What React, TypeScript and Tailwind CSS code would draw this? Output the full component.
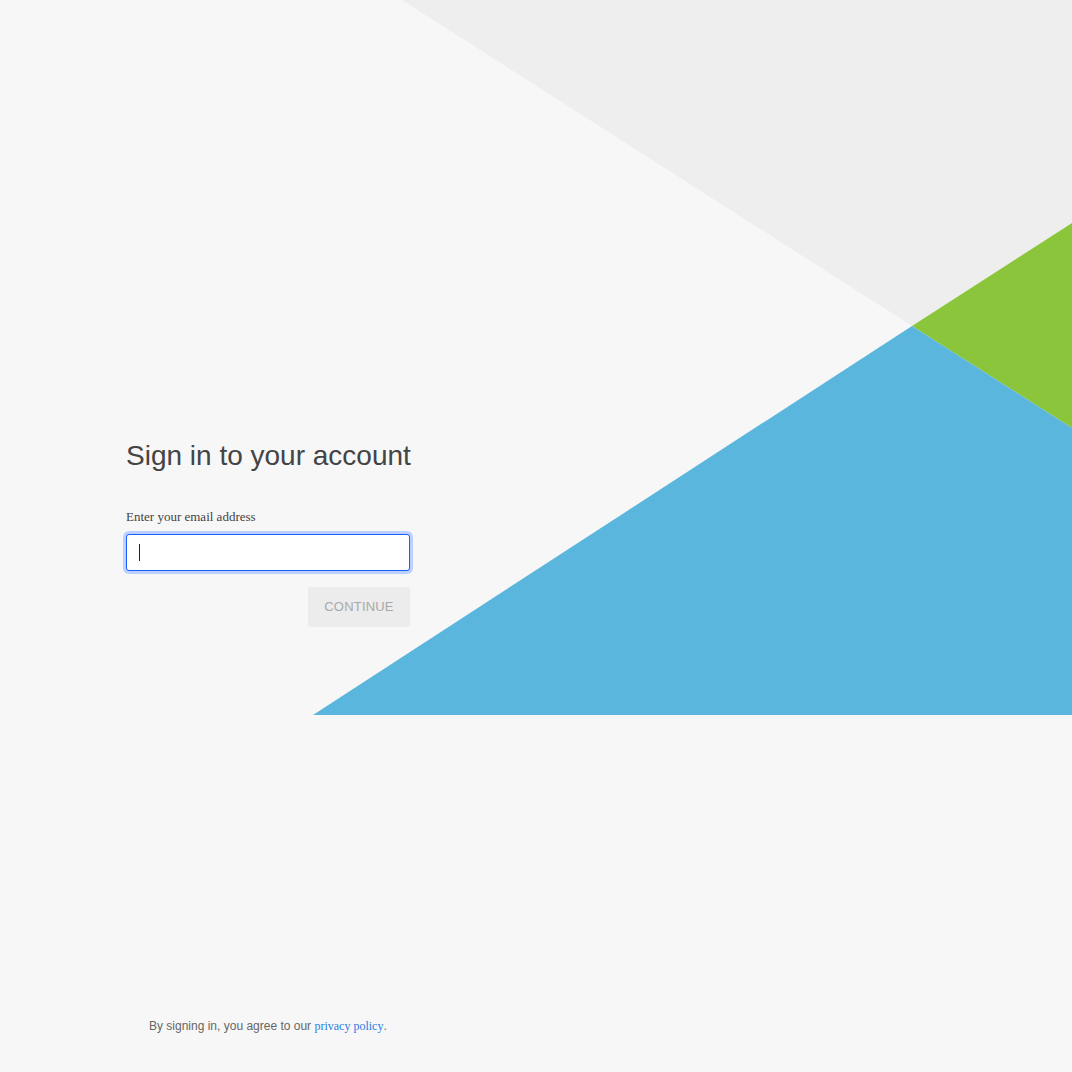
import React from "react";

const Backdrop = () => (
  <svg
    className="pointer-events-none absolute inset-0 h-full w-full"
    viewBox="0 0 1072 1072"
    preserveAspectRatio="none"
  >
    <polygon points="402,0 1072,0 1072,223 912,326" fill="#eeeeee" />
    <polygon points="912,326 1072,223 1072,428" fill="#8bc53b" />
    <polygon points="313,715 912,326 1072,428 1072,715" fill="#5ab6dd" />
  </svg>
);

const App: React.FC = () => {
  return (
    <div className="relative flex h-[1072px] w-full flex-col overflow-hidden bg-[#f7f7f7] font-['Liberation_Sans',Arial,sans-serif]">
      <Backdrop />
      <main className="relative flex flex-1 items-center pl-[126px] pt-[46px]">
        <form className="flex w-[284px] flex-col" onSubmit={(e) => e.preventDefault()}>
          <h1 className="text-[28px] leading-[34px] text-[#444444] whitespace-nowrap">
            Sign in to your account
          </h1>
          <label
            htmlFor="email"
            className="mt-[36px] font-['Liberation_Serif','Times_New_Roman',serif] text-[13px] leading-[16px] text-[#444444]"
          >
            Enter your email address
          </label>
          <div className="relative mt-[9px]">
            <input
              id="email"
              type="email"
              className="h-[37px] w-full rounded-[3px] border border-[#1a5cff] bg-white px-3 text-sm text-[#333] outline-none ring-[3px] ring-[#bcd0ff]"
            />
            <span className="pointer-events-none absolute left-[13px] top-[10px] h-[17px] w-px bg-[#222]"></span>
          </div>
          <div className="mt-[16px] flex justify-end">
            <button
              type="submit"
              disabled
              className="h-[40px] w-[102px] rounded-[2px] bg-[#ececec] text-[13px] tracking-[0.2px] text-[#a9a9a9]"
            >
              CONTINUE
            </button>
          </div>
        </form>
      </main>
      <footer className="relative pb-[39px] pl-[149px] text-[12px] leading-[14px] text-[#666666]">
        By signing in, you agree to our{" "}
        <a href="#" className="font-['Liberation_Serif','Times_New_Roman',serif] text-[12px] text-[#2a7de1]">
          privacy policy
        </a>
        .
      </footer>
    </div>
  );
};

export default App;
